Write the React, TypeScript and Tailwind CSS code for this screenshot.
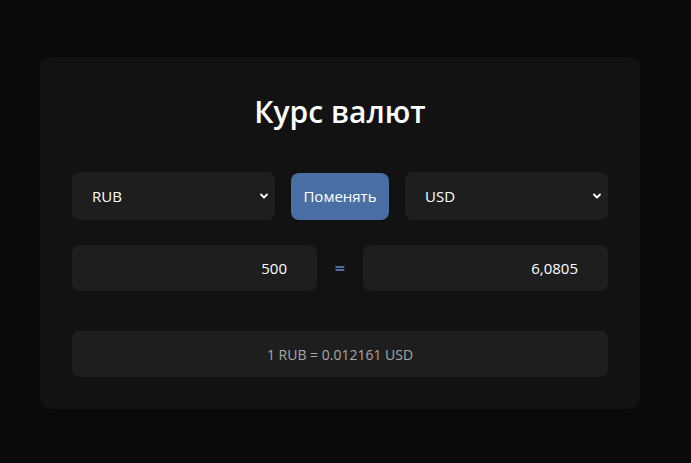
import React, { useState } from "react";

const Chevron = () => (
  <svg
    width="10"
    height="10"
    viewBox="0 0 10 10"
    className="pointer-events-none absolute right-[6px] top-1/2 -translate-y-1/2"
  >
    <path
      d="M2 3.5 L5 6.5 L8 3.5"
      fill="none"
      stroke="#ffffff"
      strokeWidth="1.8"
      strokeLinecap="round"
      strokeLinejoin="round"
    />
  </svg>
);

type CurrencySelectProps = {
  value: string;
  onChange: (v: string) => void;
};

const CurrencySelect = ({ value, onChange }: CurrencySelectProps) => (
  <div className="relative flex-1">
    <select
      value={value}
      onChange={(e) => onChange(e.target.value)}
      className="h-12 w-full appearance-none rounded-lg bg-[#1e1e1e] pl-5 text-[15px] text-white outline-none"
    >
      <option value="RUB">RUB</option>
      <option value="USD">USD</option>
      <option value="EUR">EUR</option>
    </select>
    <Chevron />
  </div>
);

const App = () => {
  const [from, setFrom] = useState("RUB");
  const [to, setTo] = useState("USD");
  const [amount, setAmount] = useState("500");
  const rate = 0.012161;

  const result = (parseFloat(amount || "0") * rate)
    .toFixed(4)
    .replace(".", ",");

  return (
    <div
      className="flex min-h-[463px] w-full items-start bg-[#0a0a0a] pl-10 pt-[57px]"
      style={{ fontFamily: '"Open Sans", "Noto Sans", sans-serif' }}
    >
      <div className="flex w-[600px] flex-col rounded-xl bg-[#121212] px-8 pb-8 pt-[34px]">
        <h1 className="mb-[40px] text-center text-[30px] font-semibold leading-[41px] text-white">
          Курс валют
        </h1>

        <div className="flex items-center gap-4">
          <CurrencySelect value={from} onChange={setFrom} />
          <button
            onClick={() => {
              setFrom(to);
              setTo(from);
            }}
            className="h-[47px] w-[98px] rounded-lg bg-[#4a6fa5] text-[15px] text-white"
          >
            Поменять
          </button>
          <CurrencySelect value={to} onChange={setTo} />
        </div>

        <div className="mt-[25px] flex items-center gap-4">
          <input
            value={amount}
            onChange={(e) => setAmount(e.target.value)}
            className="h-[46px] w-0 flex-1 rounded-lg bg-[#1e1e1e] pr-[30px] text-right text-[15px] text-white outline-none"
          />
          <span className="w-[14px] text-center text-[18px] font-bold text-[#4a6fa5]">=</span>
          <input
            value={result}
            readOnly
            className="h-[46px] w-0 flex-1 rounded-lg bg-[#1e1e1e] pr-[30px] text-right text-[15px] text-white outline-none"
          />
        </div>

        <div className="mt-10 flex h-[46px] items-center justify-center rounded-lg bg-[#1e1e1e] text-[14px] text-[#a8a8a8]">
          1 {from} = {rate} {to}
        </div>
      </div>
    </div>
  );
};

export default App;
